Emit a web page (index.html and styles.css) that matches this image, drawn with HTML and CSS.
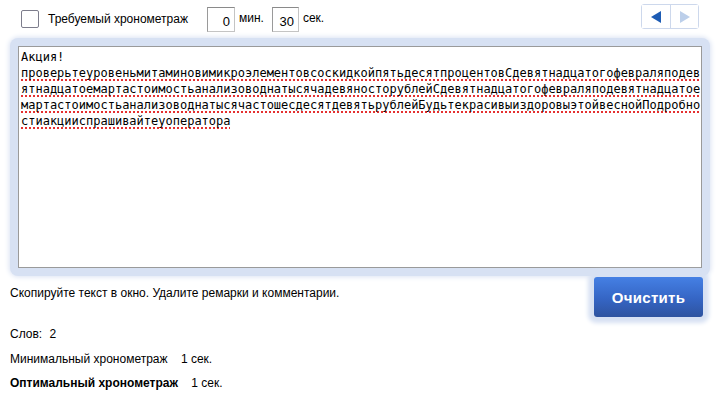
FILE: index.html
```html
<!DOCTYPE html>
<html lang="ru">
<head>
  <meta charset="UTF-8" />
  <title>Хронометраж</title>
  <link rel="stylesheet" href="styles.css">
</head>
<body>

  <div class="top-row">
    <label class="timing">
      <span class="checkbox"></span>
      <span>Требуемый хронометраж</span>
    </label>
    <div class="time-fields">
      <span class="num-box">0</span>
      <span class="unit">мин.</span>
      <span class="num-box">30</span>
      <span class="unit">сек.</span>
    </div>
    <div class="nav">
      <button type="button" class="nav-btn">
        <svg width="10" height="12" viewBox="0 0 10 12"><polygon points="10,0 10,12 0,6" fill="#1d5cb4"/></svg>
      </button>
      <button type="button" class="nav-btn">
        <svg width="10" height="12" viewBox="0 0 10 12"><polygon points="0,0 0,12 10,6" fill="#bccfea"/></svg>
      </button>
    </div>
  </div>

  <div class="editor-wrap">
    <div class="editor">Акция!<br><span class="misspelled">проверьтеуровеньмитаминовимикроэлементовсоскидкойпятьдесятпроцентовСдевятнадцатогофевраляподевятнадцатоемартастоимостьанализоводнатысячадевяносторублейСдевятнадцатогофевраляподевятнадцатоемартастоимостьанализоводнатысячастошесдесятдевятьрублейБудьтекрасивыиздоровыэтойвеснойПодробностиакцииспрашивайтеуоператора</span></div>
  </div>

  <div class="action-row">
    <p class="hint">Скопируйте текст в окно. Удалите ремарки и комментарии.</p>
    <button type="button" class="clear-btn">Очистить</button>
  </div>

  <div class="stats">
    <p class="words">Слов: <span class="val">2</span></p>
    <p class="min">Минимальный хронометраж <span class="val">1 сек.</span></p>
    <p class="opt"><b>Оптимальный хронометраж</b> <span class="val">1 сек.</span></p>
  </div>

</body>
</html>
```

FILE: styles.css
```css
body {
  margin: 0;
  font-family: "Liberation Sans", Arial, sans-serif;
  font-size: 12px;
  color: #000;
  background: #fff;
}

.top-row {
  display: flex;
  align-items: center;
  height: 36px;
  padding: 0 21px 0 21px;
}

.timing {
  display: flex;
  align-items: center;
  gap: 9px;
  margin-top: 2px;
}

.checkbox {
  width: 16px;
  height: 16px;
  border: 1px solid #7d7d8c;
  border-radius: 2px;
  background: #fff;
}

.time-fields {
  display: flex;
  align-items: center;
  margin-left: 19px;
  margin-top: 2px;
}

.num-box {
  box-sizing: border-box;
  height: 25px;
  padding: 4px 4px 0 0;
  display: flex;
  align-items: center;
  justify-content: flex-end;
  font-size: 13px;
  border: 1px solid #c4c4c4;
  border-top-color: #8a8a8a;
  border-left-color: #9a9a9a;
}

.num-box:nth-child(1) {
  width: 28px;
}

.num-box:nth-child(3) {
  width: 27px;
}

.unit {
  margin: -3px 8px 0 4px;
}

.nav {
  display: flex;
  margin-left: auto;
  margin-top: -3px;
  border: 1px solid #cdd8ec;
  border-radius: 3px;
}

.nav-btn {
  width: 28px;
  height: 23px;
  border: none;
  background: #fff;
  padding: 0;
  display: flex;
  align-items: center;
  justify-content: center;
}

.nav-btn + .nav-btn {
  border-left: 1px solid #cdd8ec;
}

.editor-wrap {
  margin: 2px 10px 0 10px;
  padding: 8px;
  background: #d7e1f3;
  border-radius: 8px;
  box-shadow: 0 0 5px 1px #dbe3f3;
}

.editor {
  height: 216px;
  padding: 2px 0 2px 2px;
  background: #fff;
  border: 1px solid #9a9a9a;
  font-family: "DejaVu Sans Mono", monospace;
  font-size: 12px;
  line-height: 16px;
  word-break: break-all;
}

.misspelled {
  text-decoration: underline dotted #e53030;
  text-decoration-thickness: 2px;
  text-underline-offset: 2px;
}

.action-row {
  display: flex;
  align-items: flex-start;
  justify-content: space-between;
  padding: 0 17px 0 10px;
}

.hint {
  margin: 10px 0 0 0;
}

.clear-btn {
  width: 109px;
  height: 40px;
  margin-top: 1px;
  border: none;
  border-radius: 3px;
  color: #fff;
  font-family: "Liberation Sans", Arial, sans-serif;
  font-size: 15px;
  font-weight: bold;
  letter-spacing: 0.3px;
  background: linear-gradient(#4580e4, #3565c4 55%, #2e539f);
  box-shadow: 0 0 4px 6px #d7e1f3;
}

.stats {
  padding: 0 10px;
}

.stats p {
  margin: 0;
}

.words {
  margin-top: 10px !important;
}

.words .val {
  margin-left: 4px;
}

.min {
  margin-top: 11px !important;
}

.min .val,
.opt .val {
  margin-left: 10px;
}

.opt {
  margin-top: 10px !important;
}
```
